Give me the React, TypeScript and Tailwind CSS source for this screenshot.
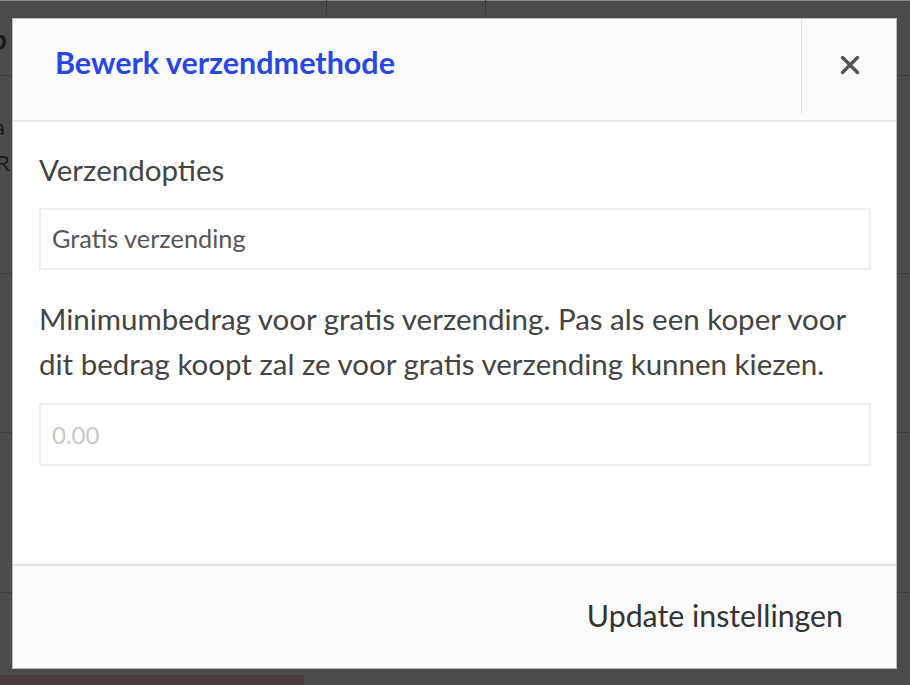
import React from "react";

export default function App() {
  const font = { fontFamily: "Lato, 'Noto Sans', sans-serif" };
  return (
    <div className="relative w-[910px] h-[685px] overflow-hidden bg-[#4b4b4b]" style={font}>
      {/* underlying page, seen through the overlay */}
      <div className="absolute inset-0">
        <div className="h-px bg-[#8a8a8a]" />
        <div className="absolute left-[326px] top-0 h-[18px] w-px bg-[#3c3c3c]" />
        <div className="absolute left-[485px] top-0 h-[18px] w-px bg-[#3c3c3c]" />
        <div className="absolute left-0 right-0 top-[75px] h-px bg-[#3f3f3f]" />
        <div className="absolute left-0 right-0 top-[273px] h-px bg-[#3f3f3f]" />
        <div className="absolute left-0 right-0 top-[432px] h-px bg-[#3f3f3f]" />
        <div className="absolute left-0 right-0 top-[592px] h-px bg-[#3f3f3f]" />
        <div className="absolute left-[-8px] top-[20px] text-[26px] font-bold text-[#1a1a1a]">p</div>
        <div className="absolute left-[-6px] top-[110px] text-[22px] text-[#1a1a1a]">a</div>
        <div className="absolute left-[-4px] top-[146px] text-[22px] text-[#1a1a1a]">R</div>
        <div className="absolute left-0 top-[675px] h-[10px] w-[304px] bg-[#4a3c3c]" />
      </div>

      {/* modal */}
      <div className="absolute left-[12px] top-[18px] w-[885px] h-[651px] bg-white flex flex-col border border-[#bdbdbd]">
        <div className="h-[103px] flex bg-[#fcfcfc] border-b-2 border-[#e6e6e6]">
          <div className="flex-1 flex items-center pl-[42px] pb-[15px]">
            <h2 className="text-[30.5px] font-bold text-[#2748e6] leading-[36px]">Bewerk verzendmethode</h2>
          </div>
          <div className="w-[95px] h-[95px] border-l border-[#dcdcdc] flex items-center justify-center pb-[3px]">
            <svg width="20" height="20" viewBox="0 0 20 20" className="ml-[2px]">
              <path d="M2.5 2.5 L17.5 17.5 M17.5 2.5 L2.5 17.5" stroke="#555" strokeWidth="3.4" strokeLinecap="round" />
            </svg>
          </div>
        </div>

        <div className="flex-1 px-[26px] pt-[30px] flex flex-col">
          <label className="text-[29.5px] text-[#444] leading-[36px]">Verzendopties</label>
          <div className="mt-[20px] h-[62px] border-2 border-[#eeeeee] flex items-center px-[11px] mr-[-1px]">
            <span className="text-[25.3px] text-[#555]">Gratis verzending</span>
          </div>
          <p className="mt-[26px] text-[29.5px] leading-[45px] text-[#444]">
            Minimumbedrag voor gratis verzending. Pas als een koper voor dit bedrag koopt zal ze voor gratis verzending kunnen kiezen.
          </p>
          <div className="mt-[17px] h-[63px] border-2 border-[#eeeeee] flex items-center px-[11px] mr-[-1px]">
            <span className="text-[24px] text-[#c8c8c8]">0.00</span>
          </div>
        </div>

        <div className="h-[104px] bg-[#fbfbfb] border-t-2 border-[#e2e2e2] flex items-center justify-end pr-[53px] pb-[2px] shadow-[0_-2px_3px_rgba(0,0,0,0.03)]">
          <span className="text-[30.3px] text-[#333]">Update instellingen</span>
        </div>
      </div>
    </div>
  );
}
